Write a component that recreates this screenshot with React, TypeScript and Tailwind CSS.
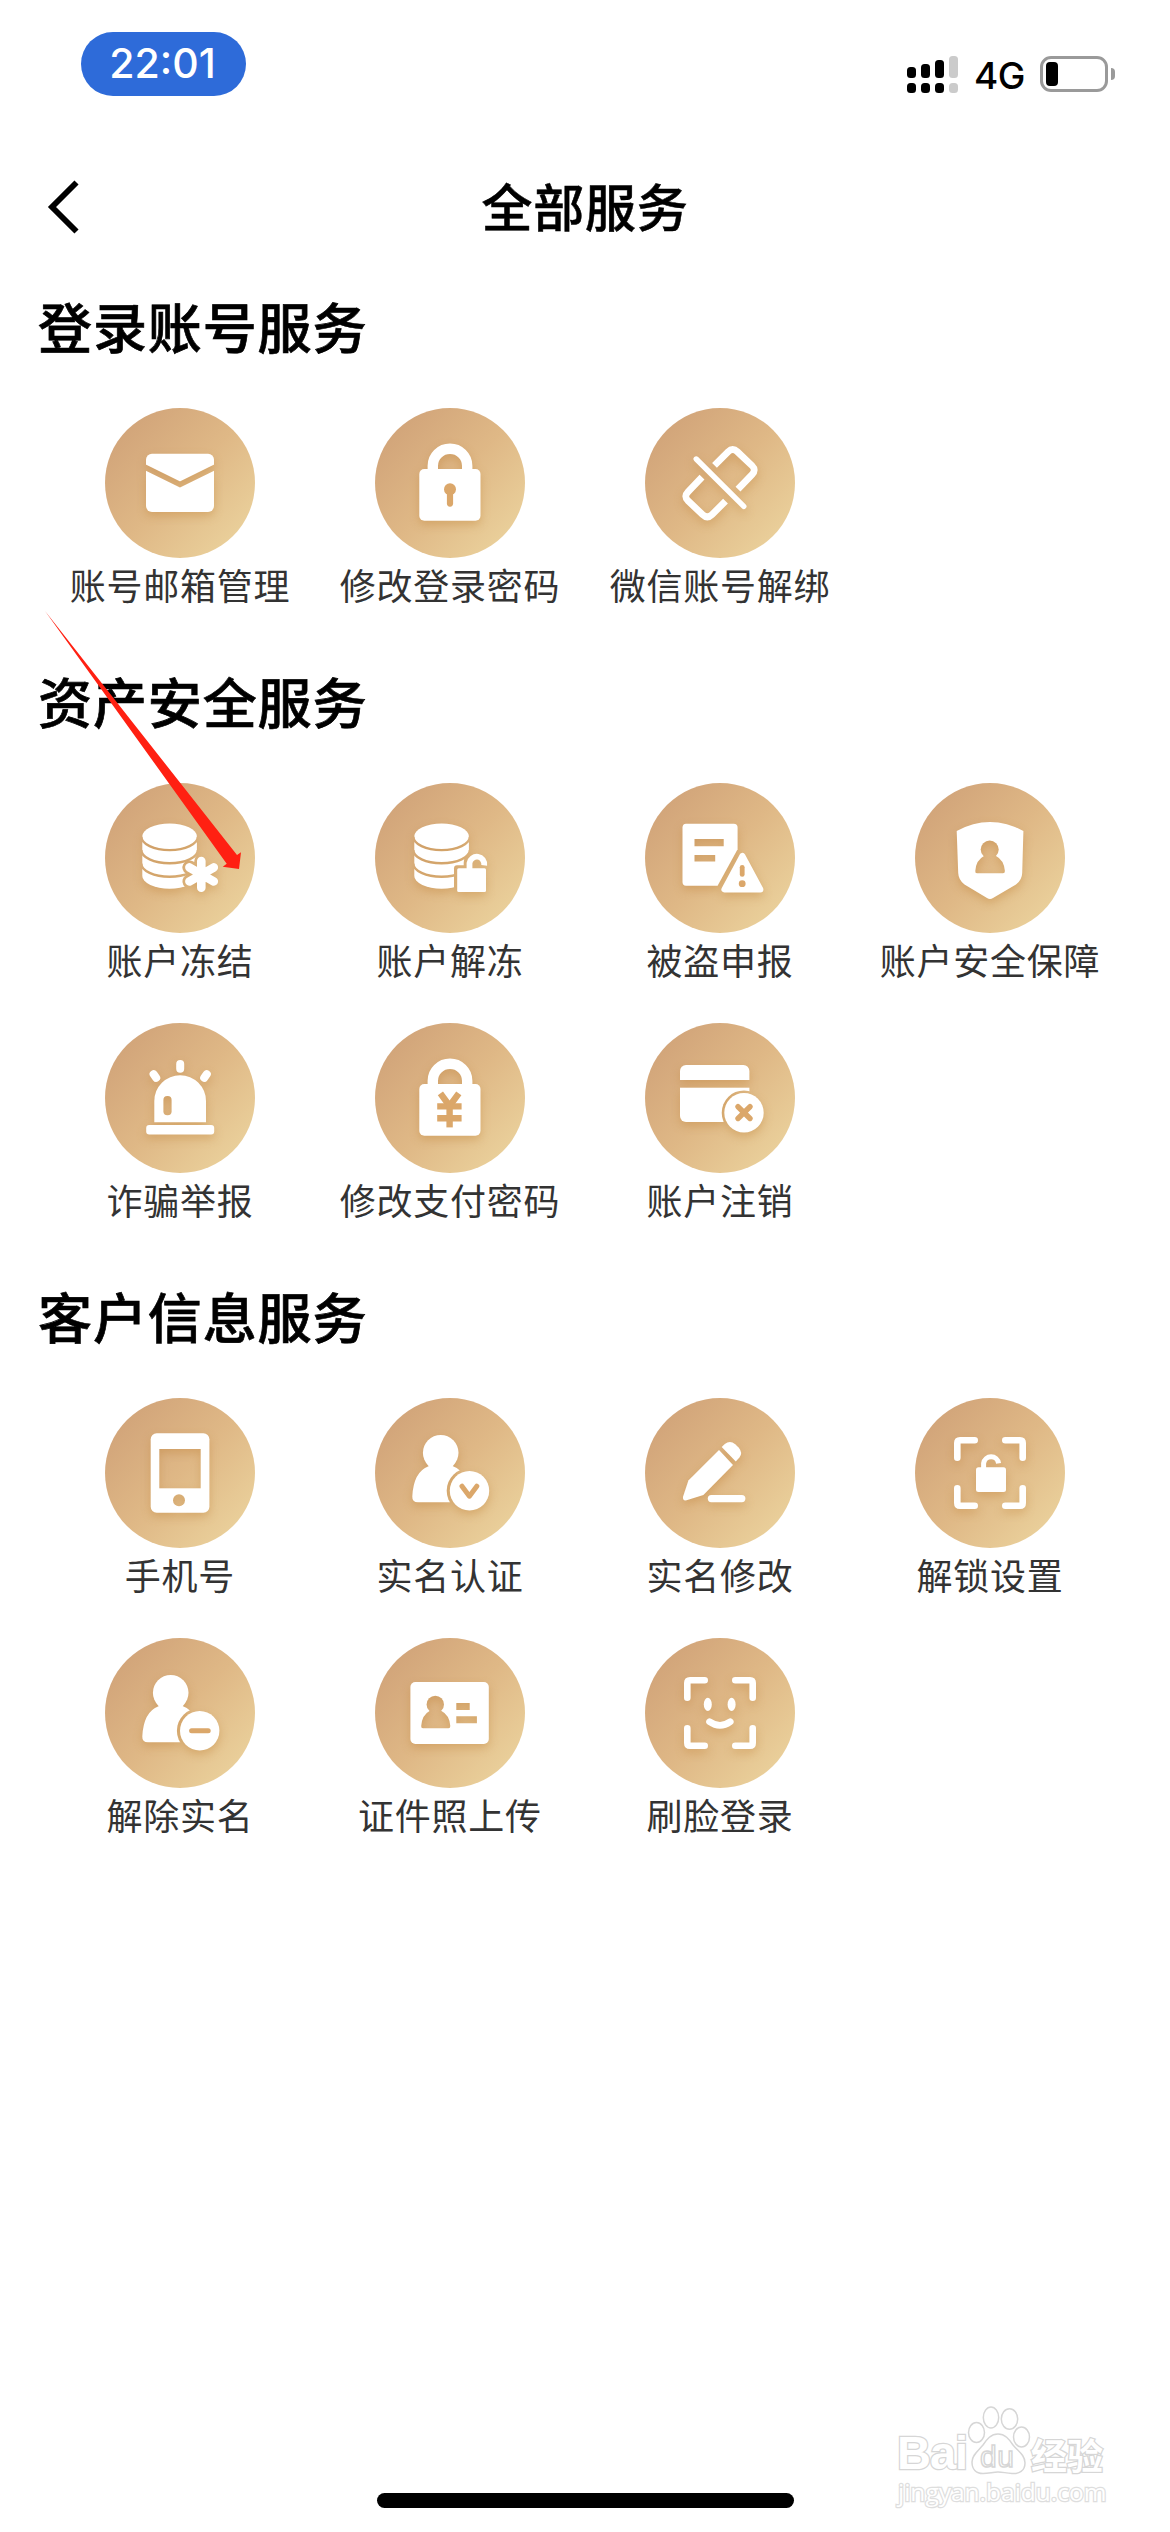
import type { ReactNode } from "react";

type GlyphProps = { id: string; cut?: ReactNode; over?: ReactNode; children: ReactNode };

/** Round gold badge with a white pictogram; `cut` is knocked out, `over` is painted on top. */
function Glyph({ id, cut, over, children }: GlyphProps) {
  return (
    <svg viewBox="0 0 150 150" className="block size-[150px] shrink-0" fill="none">
      <defs>
        <linearGradient id={id + "-bg"} x1="0.12" y1="0.15" x2="0.88" y2="0.88">
          <stop offset="0" stopColor="#d2a57a" />
          <stop offset="0.5" stopColor="#dfb886" />
          <stop offset="1" stopColor="#ead09b" />
        </linearGradient>
        <mask id={id + "-cut"} maskUnits="userSpaceOnUse" x="0" y="0" width="150" height="150">
          <rect width="150" height="150" fill="#fff" />
          {cut}
        </mask>
      </defs>
      <circle cx="75" cy="75" r="75" fill={"url(#" + id + "-bg)"} />
      <g className="drop-shadow-[0_4px_5px_rgba(190,125,50,0.38)]">
        <g mask={"url(#" + id + "-cut)"}>{children}</g>
        {over}
      </g>
    </svg>
  );
}

const GOLD = "#dba76a";

const Database = ({ x }: { x: number }) => (
  <path
    transform={"translate(" + x + " 0)"}
    d="M0 53.3A27.3 12.7 0 0 1 54.6 53.3V93A27.3 12.7 0 0 1 0 93Z"
    fill="#fff"
  />
);

const DatabaseGaps = ({ x }: { x: number }) => (
  <g transform={"translate(" + x + " 0)"} stroke="#000" strokeWidth="2.4">
    <path d="M-1 53.5A28.3 13.6 0 0 0 55.6 53.5" />
    <path d="M-1 67A28.3 13.3 0 0 0 55.6 67" />
    <path d="M-1 80.4A28.3 13.3 0 0 0 55.6 80.4" />
  </g>
);

const ScanFrame = () => (
  <path
    d="M42.3 59.7V45Q42.3 42.3 45 42.3H59.7M90.3 42.3H105Q107.7 42.3 107.7 45V59.7M107.7 90.3V105Q107.7 107.7 105 107.7H90.3M59.7 107.7H45Q42.3 107.7 42.3 105V90.3"
    stroke="#fff"
    strokeWidth="6.6"
    strokeLinecap="round"
  />
);

const Person = () => (
  <g fill="#fff">
    <circle cx="65.7" cy="54.8" r="17.8" />
    <path d="M43 104.3Q37 104.3 37.3 98.5Q38.5 74 53.5 68.3Q56.5 67 53 64H78.5Q75 67 78 68.3Q94 74 94 104.3Z" />
  </g>
);

const Padlock = () => (
  <g>
    <rect x="44.3" y="61" width="61.2" height="51.7" rx="5" fill="#fff" />
    <path d="M57.8 63V57.7A17.2 17 0 0 1 92.2 57.7V63" stroke="#fff" strokeWidth="10.4" />
  </g>
);

const MailIcon = () => (
  <Glyph id="mail" cut={<path d="M36 57.2L75 76.5L114 57.2" stroke="#000" strokeWidth="5.6" />}>
    <rect x="41" y="45.7" width="68" height="58.3" rx="6" fill="#fff" />
  </Glyph>
);

const LockIcon = () => (
  <Glyph
    id="lock"
    over={
      <g>
        <circle cx="75" cy="81.3" r="6" fill={GOLD} />
        <path d="M75 83V95.6" stroke={GOLD} strokeWidth="6.2" strokeLinecap="round" />
      </g>
    }
  >
    <Padlock />
  </Glyph>
);

const UnlinkIcon = () => (
  <Glyph id="unlink">
    <g stroke="#fff">
      <path d="M69.5 57.3L83 43.8Q87.7 39.2 92.4 43.8L107 57.6Q111.5 62 107 66.6L93 81.2" strokeWidth="6.8" />
      <path
        transform="rotate(180 75 75.2)"
        d="M69.5 57.3L83 43.8Q87.7 39.2 92.4 43.8L107 57.6Q111.5 62 107 66.6L93 81.2"
        strokeWidth="6.8"
      />
      <path d="M51.2 51L98.8 98.4" strokeWidth="5.4" strokeLinecap="round" />
    </g>
  </Glyph>
);

const STAR = "M96.3 78V104.8M84.4 84.4L108.8 98.4M108.8 84.4L84.4 98.4";

const FreezeIcon = () => (
  <Glyph
    id="freeze"
    cut={
      <g>
        <DatabaseGaps x={37.3} />
        <path d={STAR} stroke="#000" strokeWidth="14" strokeLinecap="round" />
      </g>
    }
    over={<path d={STAR} stroke="#fff" strokeWidth="8.6" strokeLinecap="round" />}
  >
    <Database x={37.3} />
  </Glyph>
);

const UnfreezeIcon = () => (
  <Glyph
    id="unfreeze"
    cut={
      <g>
        <DatabaseGaps x={39.3} />
        <rect x="79" y="82.3" width="36" height="30" rx="3" fill="#000" />
        <path d="M94.7 88V79.8A7.3 7.3 0 0 1 109.3 79.8" stroke="#000" strokeWidth="12" />
      </g>
    }
    over={
      <g>
        <rect x="82.2" y="85.3" width="28.8" height="23.7" rx="1.5" fill="#fff" />
        <path d="M94.5 87V80.2A7.4 7.6 0 0 1 109.2 82.4" stroke="#fff" strokeWidth="5.8" />
      </g>
    }
  >
    <Database x={39.3} />
  </Glyph>
);

const TheftIcon = () => (
  <Glyph
    id="theft"
    cut={<path d="M49.5 56H78.7V63.2H49.5ZM49.5 72H70.2V78.5H49.5Z" fill="#000" />}
    over={
      <g>
        <path
          d="M97.4 73L79.4 106.4H115.4Z"
          fill="#fff"
          stroke="#fff"
          strokeWidth="6"
          strokeLinejoin="round"
        />
        <path d="M97.2 84.3V91.4" stroke={GOLD} strokeWidth="4.8" strokeLinecap="round" />
        <circle cx="97.2" cy="100.7" r="3.4" fill={GOLD} />
      </g>
    }
  >
    <path d="M41 40.7H88.6Q92.6 40.7 92.6 44.7V66.3L72.6 102.7H41Q37.5 102.7 37.5 99V44.5Q37.5 40.7 41 40.7Z" fill="#fff" />
  </Glyph>
);

const ShieldIcon = () => (
  <Glyph
    id="shield"
    cut={
      <g fill="#000">
        <circle cx="74.7" cy="66.5" r="9" />
        <path d="M62 90.3Q60 90.3 60.3 88Q61 77 69 73H81Q89 77 89.9 88Q90 90.3 88 90.3Z" />
      </g>
    }
  >
    <path
      d="M41.7 48Q58 39 75 39Q92 39 108.4 48L107.2 90Q107 97 101 101.5L78 115Q75 117 72 115L49.5 101.5Q43.5 97 43.2 90Z"
      fill="#fff"
    />
  </Glyph>
);

const SirenIcon = () => (
  <Glyph id="siren" cut={<rect x="58.4" y="73" width="8.2" height="19.2" rx="4" fill="#000" />}>
    <path d="M49.3 99.3V78A25.8 25.8 0 0 1 101 78V99.3Z" fill="#fff" />
    <rect x="41.2" y="102" width="68" height="9.4" rx="3" fill="#fff" />
    <path
      d="M75.2 41V45.7M48.6 51.2L51.2 54.8M101.8 51.2L99.2 54.8"
      stroke="#fff"
      strokeWidth="8"
      strokeLinecap="round"
    />
  </Glyph>
);

const PayLockIcon = () => (
  <Glyph
    id="paylock"
    over={
      <g stroke={GOLD}>
        <path d="M65.4 70.3L74.6 83L83.8 70.3" strokeWidth="6.4" />
        <path d="M62.2 83.4H86.6M62.2 95.3H86.6" strokeWidth="6.4" />
        <path d="M74.6 80V104.4" strokeWidth="6.4" />
      </g>
    }
  >
    <Padlock />
  </Glyph>
);

const CardIcon = () => (
  <Glyph
    id="card"
    cut={
      <g>
        <rect x="30" y="57" width="80" height="7.7" fill="#000" />
        <circle cx="99" cy="89.7" r="22.3" fill="#000" />
      </g>
    }
    over={
      <g>
        <circle cx="99" cy="89.7" r="19.7" fill="#fff" />
        <path
          d="M93 83.7L105 95.5M105 83.7L93 95.5"
          stroke={GOLD}
          strokeWidth="5.4"
          strokeLinecap="round"
        />
      </g>
    }
  >
    <rect x="35" y="42" width="69.4" height="57" rx="6" fill="#fff" />
  </Glyph>
);

const PhoneIcon = () => (
  <Glyph
    id="phone"
    cut={
      <g fill="#000">
        <rect x="54.3" y="51" width="41.4" height="39.3" />
        <circle cx="74" cy="102.3" r="6" />
      </g>
    }
  >
    <rect x="45.7" y="35.3" width="58.7" height="79.4" rx="6" fill="#fff" />
  </Glyph>
);

const UserCheckIcon = () => (
  <Glyph
    id="usercheck"
    cut={<circle cx="94.5" cy="92.8" r="22.8" fill="#000" />}
    over={
      <g>
        <circle cx="94.5" cy="92.8" r="19.7" fill="#fff" />
        <path
          d="M87 88.2L94.4 98.2L101.8 88.2"
          stroke={GOLD}
          strokeWidth="5"
          strokeLinecap="round"
          strokeLinejoin="round"
        />
      </g>
    }
  >
    <Person />
  </Glyph>
);

const UserMinusIcon = () => (
  <Glyph
    id="userminus"
    cut={<circle cx="94.7" cy="92.8" r="22.8" fill="#000" />}
    over={
      <g>
        <circle cx="94.7" cy="92.8" r="19.7" fill="#fff" />
        <path d="M86.6 92.8H103.2" stroke={GOLD} strokeWidth="5" strokeLinecap="round" />
      </g>
    }
  >
    <Person />
  </Glyph>
);

const PencilIcon = () => (
  <Glyph id="pencil">
    <g fill="#fff">
      <path d="M74 52L88 67L58.4 97L41.6 102.3Q37.4 103 38 98.8L43.4 82.6Z" />
      <path d="M76.7 49L79.8 46Q85 41.8 90.2 46.2L93.6 49.6Q98.2 55 94.4 59.6L90.8 63.6Z" />
      <path d="M66.4 100.6H96.8" stroke="#fff" strokeWidth="7.2" strokeLinecap="round" />
    </g>
  </Glyph>
);

const ScanLockIcon = () => (
  <Glyph id="scanlock">
    <ScanFrame />
    <rect x="61" y="69.3" width="30" height="24.8" rx="2.5" fill="#fff" />
    <path d="M68.6 71V65.4A7.6 7.8 0 0 1 83.6 65.4" stroke="#fff" strokeWidth="5" />
  </Glyph>
);

const IdCardIcon = () => (
  <Glyph
    id="idcard"
    cut={
      <g fill="#000">
        <circle cx="60.3" cy="66.4" r="8.7" />
        <path d="M48 90.2Q46 90.2 46.2 88Q47 77 54.5 73H66.5Q74.5 77 75.3 88Q75.4 90.2 73.4 90.2Z" />
        <path d="M81.3 65H94.7V72H81.3ZM81.3 78.3H101.9V85.2H81.3Z" />
      </g>
    }
  >
    <rect x="35.4" y="44" width="78.4" height="62" rx="5" fill="#fff" />
  </Glyph>
);

const FaceIcon = () => (
  <Glyph id="face">
    <ScanFrame />
    <ellipse cx="62.8" cy="66.4" rx="4" ry="6.6" fill="#fff" />
    <ellipse cx="86.6" cy="66.4" rx="4" ry="6.6" fill="#fff" />
    <path d="M64.6 83.8Q75 91 85.2 83.8" stroke="#fff" strokeWidth="6.8" strokeLinecap="round" />
  </Glyph>
);

type Service = { label: string; icon: ReactNode };

const SECTIONS: { title: string; items: Service[] }[] = [
  {
    title: "登录账号服务",
    items: [
      { label: "账号邮箱管理", icon: <MailIcon /> },
      { label: "修改登录密码", icon: <LockIcon /> },
      { label: "微信账号解绑", icon: <UnlinkIcon /> },
    ],
  },
  {
    title: "资产安全服务",
    items: [
      { label: "账户冻结", icon: <FreezeIcon /> },
      { label: "账户解冻", icon: <UnfreezeIcon /> },
      { label: "被盗申报", icon: <TheftIcon /> },
      { label: "账户安全保障", icon: <ShieldIcon /> },
      { label: "诈骗举报", icon: <SirenIcon /> },
      { label: "修改支付密码", icon: <PayLockIcon /> },
      { label: "账户注销", icon: <CardIcon /> },
    ],
  },
  {
    title: "客户信息服务",
    items: [
      { label: "手机号", icon: <PhoneIcon /> },
      { label: "实名认证", icon: <UserCheckIcon /> },
      { label: "实名修改", icon: <PencilIcon /> },
      { label: "解锁设置", icon: <ScanLockIcon /> },
      { label: "解除实名", icon: <UserMinusIcon /> },
      { label: "证件照上传", icon: <IdCardIcon /> },
      { label: "刷脸登录", icon: <FaceIcon /> },
    ],
  },
];

const SIGNAL = [
  { bar: "h-[11px] bg-black", dot: "bg-black" },
  { bar: "h-[14px] bg-black", dot: "bg-black" },
  { bar: "h-[18px] bg-black", dot: "bg-black" },
  { bar: "h-[22px] bg-[#cbcbcb]", dot: "bg-[#cbcbcb]" },
];

function StatusBar() {
  return (
    <div className="flex h-[152px] items-start justify-between pl-[81px] pr-[55px] font-[Inter,sans-serif]">
      <div className="mt-8 flex h-16 w-[165px] items-center justify-center rounded-full bg-[#2e6bd9] pr-[2px] text-[41px] font-medium text-white">
        22:01
      </div>
      <div className="mt-14 flex h-[37px] items-start">
        <div className="flex items-end gap-[5px]">
          {SIGNAL.map((s, i) => (
            <div key={i} className="flex flex-col gap-[5px]">
              <div className={"w-[9px] rounded-[3.5px] " + s.bar} />
              <div className={"h-[10px] w-[9px] rounded-[3.5px] " + s.dot} />
            </div>
          ))}
        </div>
        <div className="ml-[16px] mt-[1px] w-[66px] text-[37px] font-medium leading-[37px] tracking-[-0.5px] text-black">
          4G
        </div>
        <div className="flex h-9 w-[68px] items-center rounded-[11px] border-[3px] border-[#9a9a9a] pl-[3px]">
          <div className="h-6 w-3 rounded-[4px] bg-black" />
        </div>
        <div className="ml-[3px] mt-3 h-3 w-1 rounded-r-full bg-[#9a9a9a]" />
      </div>
    </div>
  );
}

function Header() {
  return (
    <div className="grid h-[111px] grid-cols-[1fr_auto_1fr] items-center">
      <svg viewBox="0 0 36 56" className="-mt-px ml-[45px] h-14 w-9" fill="none">
        <path d="M31.5 3.5L7 28L31.5 52.5" stroke="#000" strokeWidth="5.8" />
      </svg>
      <h1 className="pb-1 text-[51px] font-medium leading-none tracking-[0.8px] text-black [-webkit-text-stroke:0.5px_#000]">
        全部服务
      </h1>
      <div />
    </div>
  );
}

function Watermark() {
  return (
    <div className="absolute left-[897px] top-[2405px] flex w-[212px] flex-col">
      <div className="flex h-[72px] items-end">
        <span className="w-[70px] whitespace-nowrap font-['Liberation_Sans',sans-serif] text-[47px] font-bold leading-[48px] tracking-[-1px] text-white [-webkit-text-stroke:2.5px_#d6d6d6] [paint-order:stroke]">
          Bai
        </span>
        <svg viewBox="0 0 64 72" className="h-[72px] w-16 shrink-0" fill="#fff" stroke="#d6d6d6" strokeWidth="1.5">
          <ellipse cx="9.5" cy="27.5" rx="8" ry="10" />
          <ellipse cx="24" cy="12.5" rx="7.7" ry="10.5" />
          <ellipse cx="42.5" cy="14" rx="8.2" ry="10.3" />
          <ellipse cx="54.5" cy="32" rx="8" ry="10" />
          <path d="M31 29C38 29 42 34 46 40C51 46 58 50 58 58C58 66 52 69 45 68.5C38 68 36 67 31 67C26 67 22 68.5 16 68.5C9 68.5 5 64 5 57C5 50 11 46 16 40C20 34 24 29 31 29Z" />
          <text
            x="13"
            y="62"
            textLength="34"
            className="font-['Liberation_Sans',sans-serif] text-[30px]"
          >
            du
          </text>
        </svg>
        <span className="whitespace-nowrap text-[36px] font-bold leading-[46px] text-white [-webkit-text-stroke:2.5px_#d6d6d6] [paint-order:stroke]">
          经验
        </span>
      </div>
      <span className="-mt-px whitespace-nowrap pl-px font-['Open_Sans',sans-serif] text-[24.5px] leading-[32px] text-white [-webkit-text-stroke:2.5px_#dedede] [paint-order:stroke]">
        jingyan.baidu.com
      </span>
    </div>
  );
}

export default function App() {
  return (
    <div className="relative flex h-[2532px] w-[1170px] flex-col overflow-hidden bg-white font-['Noto_Sans_CJK_SC',sans-serif]">
      <StatusBar />
      <Header />
      <main className="flex flex-col pt-[10px]">
        {SECTIONS.map((section) => (
          <section key={section.title}>
            <h2 className="flex h-[110px] items-center pb-1 pl-[38px] text-[54px] font-medium leading-none tracking-[0.9px] text-black [-webkit-text-stroke:0.7px_#000]">
              {section.title}
            </h2>
            <div className="grid grid-cols-4 px-[45px] pt-[25px]">
              {section.items.map((item) => (
                <div key={item.label} className="flex h-[240px] flex-col items-center">
                  {item.icon}
                  <span className="h-14 whitespace-nowrap text-[36px] leading-[52px] tracking-[0.75px] text-[#333]">
                    {item.label}
                  </span>
                </div>
              ))}
            </div>
          </section>
        ))}
      </main>
      <div className="mx-auto mb-6 mt-auto h-[15px] w-[417px] rounded-full bg-black" />

      <svg viewBox="0 0 200 262" className="absolute left-[44px] top-[610px] h-[262px] w-[200px]" fill="#ff2012">
        <path d="M1 1L193 245L197 242.3L195 259L178.7 256.7L182.7 253.7Z" />
      </svg>
      <Watermark />
    </div>
  );
}
